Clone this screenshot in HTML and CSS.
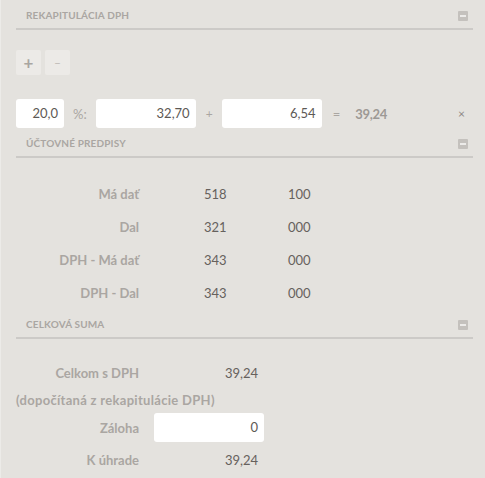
FILE: index.html
```html
<!DOCTYPE html>
<html lang="sk">
<head>
<meta charset="utf-8">
<title>Rekapitulácia DPH</title>
<link rel="stylesheet" href="styles.css">
</head>
<body>
<div class="page">
  <section class="section">
    <div class="head"><span class="head-title">Rekapitulácia DPH</span><span class="collapse"></span></div>
    <div class="tools">
      <button class="tool plus">+</button>
      <button class="tool minus">–</button>
    </div>
    <div class="vat-row">
      <div class="input w48">20,0</div>
      <span class="op pct">%:</span>
      <div class="input w100">32,70</div>
      <span class="op plus-op">+</span>
      <div class="input w100">6,54</div>
      <span class="op eq">=</span>
      <span class="total">39,24</span>
      <span class="remove">×</span>
    </div>
  </section>

  <section class="section">
    <div class="head"><span class="head-title">Účtovné predpisy</span><span class="collapse"></span></div>
    <div class="entries">
      <div class="entry"><span class="label">Má dať</span><span class="acc">518</span><span class="acc2">100</span></div>
      <div class="entry"><span class="label">Dal</span><span class="acc">321</span><span class="acc2">000</span></div>
      <div class="entry"><span class="label">DPH - Má dať</span><span class="acc">343</span><span class="acc2">000</span></div>
      <div class="entry"><span class="label">DPH - Dal</span><span class="acc">343</span><span class="acc2">000</span></div>
    </div>
  </section>

  <section class="section">
    <div class="head"><span class="head-title">Celková suma</span><span class="collapse"></span></div>
    <div class="sums">
      <div class="sum r1"><span class="label">Celkom s DPH</span><span class="val">39,24</span></div>
      <div class="sum r2"><span class="label note">(dopočítaná z rekapitulácie DPH)</span></div>
      <div class="sum r3"><span class="label">Záloha</span><div class="input w110">0</div></div>
      <div class="sum r4"><span class="label">K úhrade</span><span class="val">39,24</span></div>
    </div>
  </section>
</div>
</body>
</html>
```

FILE: styles.css
```css
* { box-sizing: border-box; }
html, body { margin: 0; padding: 0; }
body {
  background: #e4e2de;
  font-family: Lato, "Liberation Sans", sans-serif;
  width: 485px;
  height: 478px;
  overflow: hidden;
}
.page {
  padding: 0 12px 0 15px;
  border-left: 1px solid #ecebe8;
  height: 478px;
}
.head {
  height: 30px;
  border-bottom: 2px solid #cccac7;
  display: flex;
  align-items: center;
  justify-content: space-between;
  padding: 1px 5px 0 10px;
}
.head-title {
  text-transform: uppercase;
  font-size: 10px;
  font-weight: 700;
  color: #aaa6a2;
  letter-spacing: 0.15px;
}
.collapse {
  width: 10px;
  height: 10px;
  background: #c4c1bd;
  border-radius: 1px;
  position: relative;
  margin-top: 2px;
}
.collapse::after {
  content: "";
  position: absolute;
  left: 2px;
  right: 2px;
  top: 4px;
  height: 2px;
  background: #ecebe9;
}
.tools {
  display: flex;
  gap: 4px;
  margin-top: 20px;
}
.tool {
  width: 25px;
  height: 25px;
  border: 0;
  border-radius: 2px;
  background: #eceae7;
  color: #a9a5a1;
  font-family: Lato, sans-serif;
  font-size: 17px;
  font-weight: 700;
  padding: 0;
  line-height: 25px;
}
.tool.minus { font-size: 12px; font-weight: 400; color: #bdb9b5; }
.vat-row {
  display: flex;
  align-items: center;
  margin-top: 24px;
  height: 29px;
}
.input {
  height: 29px;
  background: #fff;
  border-radius: 3px;
  text-align: right;
  padding-right: 6px;
  font-size: 13px;
  line-height: 29px;
  color: #5d5955;
}
.w48 { width: 48px; }
.w100 { width: 100px; }
.w110 { width: 110px; }
.op {
  color: #aaa6a2;
  font-size: 13px;
}
.pct { margin: 0 9px 0 9px; }
.plus-op { margin: 0 9px 0 10px; font-size: 12px; }
.eq { margin: 0 9px 0 11px; }
.total {
  color: #9d9995;
  font-size: 13px;
  font-weight: 700;
  margin-left: 6px;
  letter-spacing: -0.3px;
}
.remove {
  margin-left: auto;
  margin-right: 8px;
  color: #8d8985;
  font-size: 12px;
}
.entries { padding-top: 19px; }
.entry {
  display: flex;
  align-items: center;
  height: 33px;
}
.label {
  width: 123px;
  text-align: right;
  font-size: 13px;
  font-weight: 700;
  color: #aaa6a2;
  flex-shrink: 0;
}
.acc {
  width: 84px;
  margin-left: 65px;
  font-size: 13px;
  color: #66615d;
}
.acc2 {
  font-size: 13px;
  color: #66615d;
}
.sums { padding-top: 20px; }
.sum {
  display: flex;
  align-items: center;
}
.r1 { height: 28px; }
.r2 { height: 26px; }
.r3 { height: 29px; }
.r4 { height: 29px; margin-top: 3px; }
.note { width: auto; text-align: left; white-space: nowrap; letter-spacing: 0.3px; }
.val {
  width: 110px;
  margin-left: 15px;
  text-align: right;
  padding-right: 6px;
  font-size: 13px;
  color: #66615d;
}
.r3 .input { margin-left: 15px; }
```
